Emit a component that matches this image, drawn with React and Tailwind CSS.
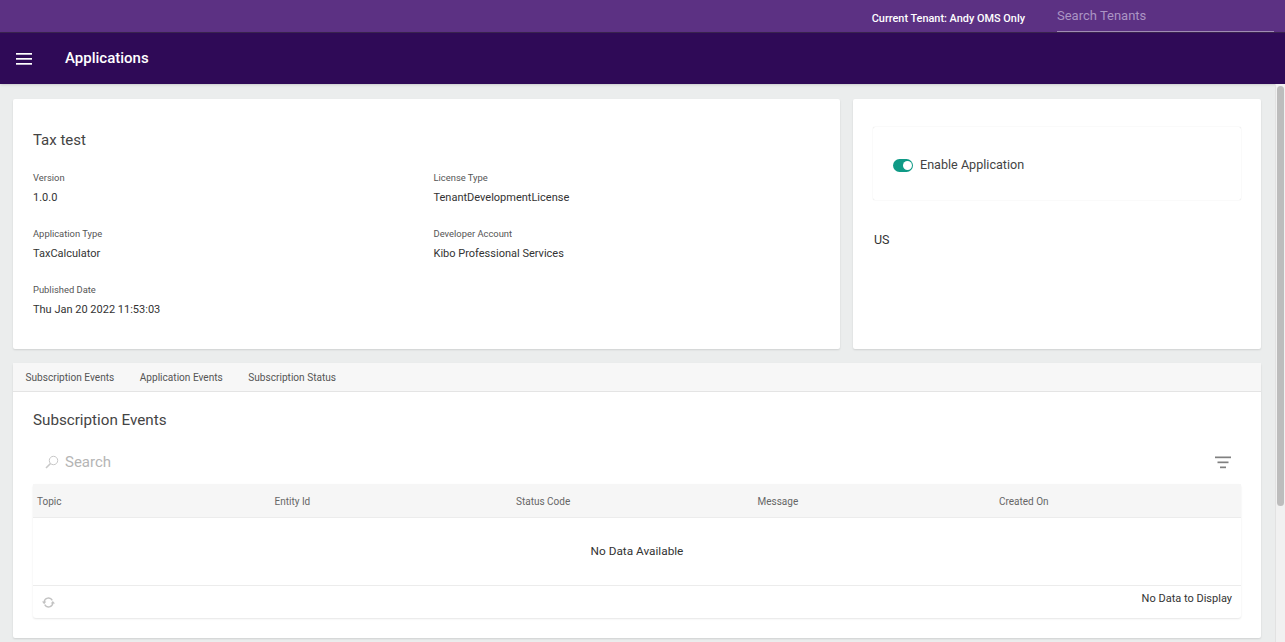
import React from "react";

const Field = ({ label, value }) => (
  <div className="h-[56px] pt-[3px]">
    <div className="text-[9.4px] leading-[12px] text-[#555]">{label}</div>
    <div className="text-[11px] leading-[14px] text-[#333] mt-[7px]">{value}</div>
  </div>
);

const columns = [
  ["Topic", "w-[237.5px]"],
  ["Entity Id", "w-[241.5px]"],
  ["Status Code", "w-[241.5px]"],
  ["Message", "w-[241.5px]"],
  ["Created On", "flex-1"],
];

const App = () => {
  return (
    <div className="relative h-screen overflow-hidden bg-[#ebeded] font-['Roboto',sans-serif]">
      {/* Tenant bar */}
      <div className="h-[33px] bg-[#5c3183] border-b border-[#3a2450] flex justify-end items-start pr-[11px]">
        <span className="text-[10.9px] font-medium text-white mt-[12px] leading-[13px]">Current Tenant: Andy OMS Only</span>
        <div className="w-[217px] h-[32px] ml-[32px] border-b border-[#a08bb5] text-[13px] leading-[16px] pt-[8px] text-[#ab94c4]">
          Search Tenants
        </div>
      </div>

      {/* Title bar */}
      <div className="h-[51px] bg-[#2f0a57] flex items-center shadow-sm">
        <svg className="ml-[16px] w-[16px] h-[12px]" viewBox="0 0 16 12" fill="#fff">
          <rect y="0" width="16" height="1.7" />
          <rect y="5" width="16" height="1.7" />
          <rect y="10" width="16" height="1.7" />
        </svg>
        <span className="ml-[33px] text-[15px] font-medium text-white">Applications</span>
      </div>

      <div className="pl-[13px] pr-[24px] pt-[15px]">
        <div className="flex gap-[13px]">
          {/* Details */}
          <div className="w-[827px] h-[250px] bg-white rounded-[2px] shadow-[0_1px_2px_rgba(0,0,0,0.12)] px-[20px] pt-[31px]">
            <div className="text-[15px] leading-[20px] text-[#444]">Tax test</div>
            <div className="grid grid-cols-2 mt-[19px]">
              <div>
                <Field label="Version" value="1.0.0" />
                <Field label="Application Type" value="TaxCalculator" />
                <Field label="Published Date" value="Thu Jan 20 2022 11:53:03" />
              </div>
              <div className="pl-[7px]">
                <Field label="License Type" value="TenantDevelopmentLicense" />
                <Field label="Developer Account" value="Kibo Professional Services" />
              </div>
            </div>
          </div>

          {/* Enable panel */}
          <div className="w-[408px] h-[250px] bg-white rounded-[2px] shadow-[0_1px_2px_rgba(0,0,0,0.12)] px-[20px] pt-[28px]">
            <div className="h-[73px] rounded-[2px] shadow-[0_0_1px_rgba(0,0,0,0.22)] flex items-center pl-[20px] pt-[3px]">
              <div className="w-[20px] h-[13px] rounded-full bg-[#0f9a86] relative">
                <div className="absolute right-[1.5px] top-[2px] w-[9px] h-[9px] rounded-full bg-white"></div>
              </div>
              <span className="ml-[7px] text-[12.6px] text-[#444]">Enable Application</span>
            </div>
            <div className="mt-[33px] text-[12.5px] leading-[14px] text-[#333] pl-[1px]">US</div>
          </div>
        </div>

        {/* Events card */}
        <div className="mt-[14px] w-[1248px] h-[275px] bg-white rounded-[2px] shadow-[0_1px_2px_rgba(0,0,0,0.12)]">
          <div className="h-[29px] bg-[#f7f7f7] border-b border-[#e4e4e4] flex items-center pl-[12.5px] pt-[2px] gap-[25.5px] text-[10.1px] text-[#555]">
            <span>Subscription Events</span>
            <span>Application Events</span>
            <span>Subscription Status</span>
          </div>
          <div className="px-[20px]">
            <div className="pt-[18px] text-[15.2px] leading-[20px] text-[#444]">Subscription Events</div>
            <div className="h-[44px] mt-[10px] flex items-center justify-between">
              <div className="flex items-center pl-[12px]">
                <svg className="w-[14px] h-[14px]" viewBox="0 0 14 14" fill="none" stroke="#c8c8c8" strokeWidth="1">
                  <circle cx="8.5" cy="5.5" r="4.2" />
                  <path d="M5.5 8.5 L1 13" strokeWidth="1.6" />
                </svg>
                <span className="ml-[6px] text-[15px] text-[#b5b5b5]">Search</span>
              </div>
              <svg className="mr-[10px] w-[16px] h-[13px]" viewBox="0 0 16 13" fill="#808080">
                <rect x="0" y="0.5" width="16" height="1.7" />
                <rect x="2.5" y="5.5" width="11" height="1.7" />
                <rect x="5" y="10.5" width="6" height="1.7" />
              </svg>
            </div>
            <div className="rounded-[3px] shadow-[0_1px_2px_rgba(0,0,0,0.1)]">
              <div className="h-[34px] bg-[#f6f6f6] border-b border-[#ececec] flex items-center pl-[4px] pt-[1px] text-[10px] text-[#666]">
                {columns.map(([name, width]) => (
                  <div key={name} className={width}>{name}</div>
                ))}
              </div>
              <div className="h-[68px] flex items-center justify-center text-[11.8px] text-[#333] border-b border-[#ececec]">
                No Data Available
              </div>
              <div className="h-[32px] flex items-start justify-between pl-[9px] pr-[9px]">
                <svg className="mt-[10px] w-[13px] h-[13px]" viewBox="0 0 24 24" fill="none" stroke="#c2c2c2" strokeWidth="2.6">
                  <path d="M4 11a8 8 0 0 1 15-3" />
                  <path d="M20 13a8 8 0 0 1-15 3" />
                  <path d="M0 10h8l-4 5z" fill="#c2c2c2" stroke="none" />
                  <path d="M24 14h-8l4-5z" fill="#c2c2c2" stroke="none" />
                </svg>
                <span className="mt-[5px] text-[11px] text-[#333]">No Data to Display</span>
              </div>
            </div>
          </div>
        </div>
      </div>

      {/* Scrollbar */}
      <div className="absolute right-0 top-[84px] bottom-0 w-[10px] bg-[#f1f1f1] border-l border-[#e2e2e2]">
        <div className="absolute left-[1px] top-[2px] w-[7px] h-[420px] rounded-full bg-[#bdbdbd]"></div>
      </div>
    </div>
  );
};

export default App;
